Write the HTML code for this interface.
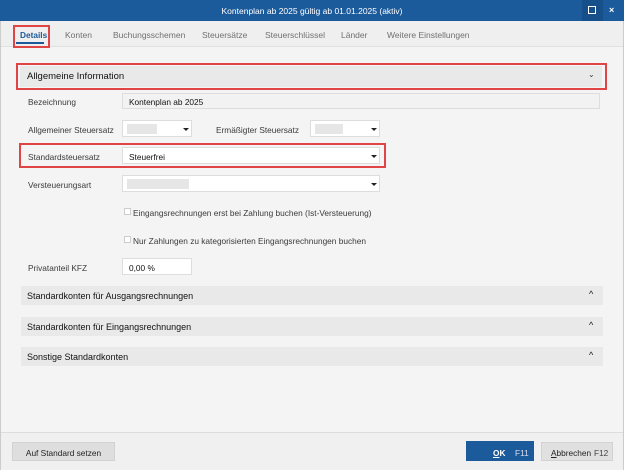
<html><head><style>
body{margin:0;width:624px;height:470px;overflow:hidden;font-family:"Liberation Sans",sans-serif;font-size:8.3px;color:#3a3a3a;background:#f4f4f4;position:relative}
div,span{position:absolute;box-sizing:border-box}
.t{white-space:nowrap}
.in{background:#fff;border:1px solid #ddd}
.arr{width:0;height:0;border-left:3px solid transparent;border-right:3px solid transparent;border-top:3px solid #222}
.sec{left:21px;width:582px;height:19px;background:#e9e9e9}
.sec .t{left:6px;top:5px;font-size:9px;color:#111}
.blur{background:#e6e6e6;height:10px}
</style></head><body>
<div style="left:0;top:0;width:624px;height:21px;background:#1b5a9b"></div>
<div class="t" style="left:0;width:624px;top:6px;text-align:center;color:#fff;font-size:8.5px">Kontenplan ab 2025 gültig ab 01.01.2025 (aktiv)</div>
<div style="left:582px;top:0;width:21px;height:21px;background:#174f8a"></div>
<div style="left:588px;top:6px;width:8px;height:8px;border:1px solid #fff"></div>
<div class="t" style="left:609px;top:5px;color:#fff;font-size:9px;font-weight:bold">×</div>
<div style="left:0;top:21px;width:624px;height:26px;background:#efefef;border-bottom:1px solid #e0e0e0"></div>
<div class="t" style="left:20px;top:30px;color:#1b5a9b;font-weight:bold;font-size:8.3px">Details</div>
<div style="left:16px;top:42px;width:28px;height:2px;background:#1b5a9b"></div>
<div style="left:13px;top:25px;width:37px;height:23px;border:2px solid #e04545"></div>
<div class="t" style="left:65px;top:30px;color:#707070;font-size:8.5px">Konten</div>
<div class="t" style="left:113px;top:30px;color:#707070;font-size:8.5px">Buchungsschemen</div>
<div class="t" style="left:202px;top:30px;color:#707070;font-size:8.5px">Steuersätze</div>
<div class="t" style="left:265px;top:30px;color:#707070;font-size:8.5px">Steuerschlüssel</div>
<div class="t" style="left:341px;top:30px;color:#707070;font-size:8.5px">Länder</div>
<div class="t" style="left:387px;top:30px;color:#707070;font-size:8.5px">Weitere Einstellungen</div>

<div style="left:20px;top:66px;width:582px;height:21px;background:#e9e9e9"></div>
<div class="t" style="left:27px;top:71px;font-size:9.5px;color:#111">Allgemeine Information</div>
<div class="t" style="left:588px;top:70px;font-size:8px">&#8964;</div>
<div style="left:16px;top:63px;width:591px;height:27px;border:2px solid #e04545"></div>

<div class="t" style="left:28px;top:97px">Bezeichnung</div>
<div class="in" style="left:122px;top:93px;width:478px;height:16px;background:#f2f2f2"></div>
<div class="t" style="left:129px;top:97px;color:#111">Kontenplan ab 2025</div>

<div class="t" style="left:28px;top:125px">Allgemeiner Steuersatz</div>
<div class="in" style="left:122px;top:120px;width:70px;height:17px"></div>
<div class="blur" style="left:127px;top:124px;width:30px"></div>
<div class="arr" style="left:183px;top:128px"></div>
<div class="t" style="left:216px;top:125px">Ermäßigter Steuersatz</div>
<div class="in" style="left:310px;top:120px;width:70px;height:17px"></div>
<div class="blur" style="left:315px;top:124px;width:28px"></div>
<div class="arr" style="left:371px;top:128px"></div>

<div class="t" style="left:28px;top:152px">Standardsteuersatz</div>
<div class="in" style="left:122px;top:147px;width:258px;height:17px"></div>
<div class="t" style="left:129px;top:152px;color:#111">Steuerfrei</div>
<div class="arr" style="left:371px;top:155px"></div>
<div style="left:19px;top:143px;width:367px;height:25px;border:2px solid #e04545"></div>

<div class="t" style="left:28px;top:180px">Versteuerungsart</div>
<div class="in" style="left:122px;top:175px;width:258px;height:17px"></div>
<div class="blur" style="left:127px;top:179px;width:62px"></div>
<div class="arr" style="left:371px;top:183px"></div>

<div style="left:124px;top:208px;width:7px;height:7px;border:1px solid #ccc;background:#fff"></div>
<div class="t" style="left:133px;top:208px">Eingangsrechnungen erst bei Zahlung buchen (Ist-Versteuerung)</div>
<div style="left:124px;top:236px;width:7px;height:7px;border:1px solid #ccc;background:#fff"></div>
<div class="t" style="left:133px;top:236px">Nur Zahlungen zu kategorisierten Eingangsrechnungen buchen</div>

<div class="t" style="left:28px;top:263px">Privatanteil KFZ</div>
<div class="in" style="left:122px;top:258px;width:70px;height:17px"></div>
<div class="t" style="left:129px;top:263px;color:#111">0,00 %</div>

<div class="sec" style="top:286px"><span class="t">Standardkonten für Ausgangsrechnungen</span><span class="t" style="left:568px;top:3px">^</span></div>
<div class="sec" style="top:317px"><span class="t">Standardkonten für Eingangsrechnungen</span><span class="t" style="left:568px;top:3px">^</span></div>
<div class="sec" style="top:347px"><span class="t">Sonstige Standardkonten</span><span class="t" style="left:568px;top:3px">^</span></div>

<div style="left:0;top:432px;width:624px;height:38px;background:#f0f0f0;border-top:1px solid #ddd"></div>
<div style="left:12px;top:442px;width:103px;height:19px;background:#dedede;border:1px solid #d2d2d2"></div>
<div class="t" style="left:12px;width:103px;top:448px;text-align:center;color:#222">Auf Standard setzen</div>
<div style="left:466px;top:441px;width:68px;height:20px;background:#1b5a9b"></div>
<div class="t" style="left:493px;top:448px;color:#fff;font-weight:bold"><u>O</u>K</div>
<div class="t" style="left:515px;top:448px;color:#dde">F11</div>
<div style="left:541px;top:442px;width:72px;height:19px;background:#e0e0e0;border:1px solid #d2d2d2"></div>
<div class="t" style="left:551px;top:448px;color:#222"><u>A</u>bbrechen</div>
<div class="t" style="left:594px;top:448px;color:#444">F12</div>
<div style="left:0;top:21px;width:1px;height:449px;background:#ccc"></div>
<div style="left:623px;top:21px;width:1px;height:449px;background:#ccc"></div>
</body></html>
